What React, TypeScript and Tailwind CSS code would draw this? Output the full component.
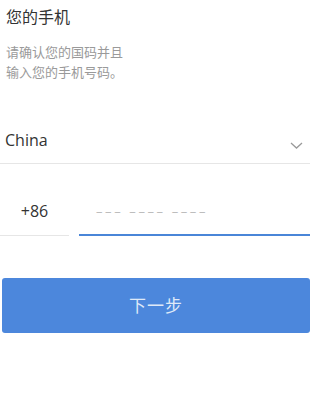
import React from "react";

export default function App() {
  return (
    <div
      className="w-[328px] h-[417px] bg-white overflow-hidden"
      style={{ fontFamily: '"Open Sans", "Noto Sans CJK SC", sans-serif' }}
    >
      <div className="w-[310px]">
        <div className="pl-[6px] pt-[6px] text-[16px] leading-[22px] text-[#333333]">您的手机</div>
        <div className="pl-[6px] pt-[14px] text-[13px] leading-[20px] text-[#9a9a9a]">
          <div>请确认您的国码并且</div>
          <div>输入您的手机号码。</div>
        </div>
        <div className="mt-[38px] flex items-start justify-between border-b border-[#e6e6e6] pl-[5px] pr-[7px] pt-[8px] pb-[11px]">
          <span className="text-[16px] leading-[24px] text-[#333333]">China</span>
          <svg width="13" height="7" viewBox="0 0 13 7" className="mt-[14px]" fill="none">
            <path d="M1 1 L6.5 6 L12 1" stroke="#9a9a9a" strokeWidth="1.3" />
          </svg>
        </div>
        <div className="mt-[35px] flex items-end gap-[10px]">
          <div className="w-[69px] border-b border-[#e6e6e6] pb-[12px] text-center text-[16px] leading-[24px] text-[#333333]">
            +86
          </div>
          <div className="flex-1 border-b-2 border-[#4a86d8] pl-[17px] pb-[11px] text-[13px] leading-[24px] tracking-[2.6px] text-[#bdbdbd]">
            ––– –––– ––––
          </div>
        </div>
        <button className="mt-[42px] ml-[2px] w-[308px] h-[55px] rounded-[3px] bg-[#4c87dc] text-[17px] text-[#dfe9f8] tracking-[1px]">
          下一步
        </button>
      </div>
    </div>
  );
}
